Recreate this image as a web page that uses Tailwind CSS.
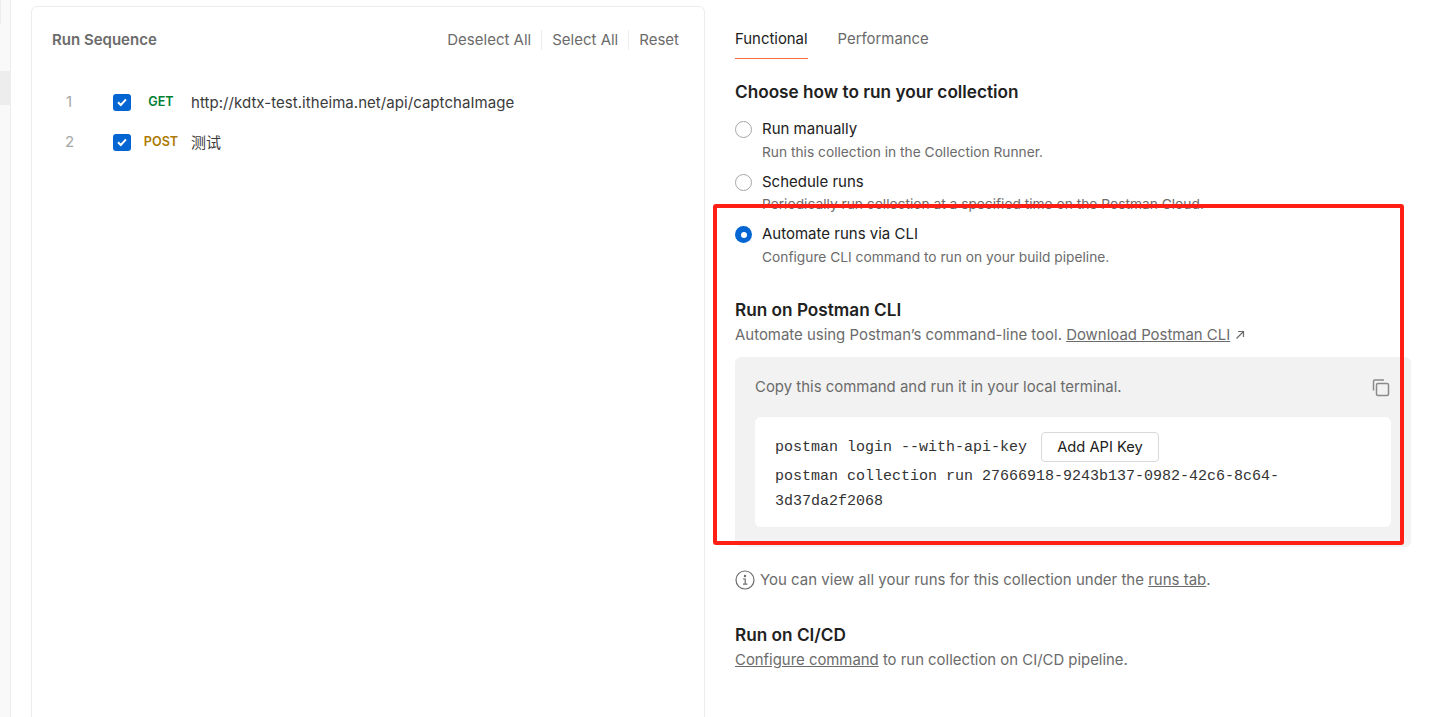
<!DOCTYPE html>
<html lang="en">
<head>
    <meta charset="UTF-8">
    <title>Run Collection</title>
    <script src="https://cdn.jsdelivr.net/npm/@tailwindcss/browser@4"></script>
</head>
<body class="relative h-[717px] w-[1447px] overflow-hidden bg-white font-['Inter','Noto_Sans_CJK_SC',sans-serif] text-[15px] text-[#212121]">
    <div class="flex h-full">
        <!-- Sidebar sliver -->
        <aside class="relative w-[11px] shrink-0 border-r border-[#ededed] bg-[#f9f9f9]">
            <div class="h-[24px] w-[1px] bg-[#ededed]"></div>
            <div class="mt-[47px] h-[34px] bg-[#ededed]"></div>
        </aside>

        <!-- Run sequence card -->
        <section class="ml-[20px] mt-[6px] h-[711px] w-[674px] shrink-0 rounded-t-md border border-b-0 border-[#ededed] px-[20px]">
            <div class="flex h-[65px] items-center justify-between pt-[1px]">
                <h2 class="font-semibold text-[#6b6b6b]">Run Sequence</h2>
                <div class="mr-[5px] flex items-center text-[15px] text-[#6b6b6b]">
                    <button class="border-r border-[#ededed] pr-[10px] leading-[20px]">Deselect All</button>
                    <button class="border-r border-[#ededed] px-[10px] leading-[20px]">Select All</button>
                    <button class="pl-[10px] leading-[20px]">Reset</button>
                </div>
            </div>
            <ul class="mt-[10px]">
                <li class="flex h-[40px] items-center">
                    <span class="w-[20px] pl-[14px] pt-[1px] text-[#a6a6a6]">1</span>
                    <span class="ml-[41px] flex h-[17px] w-[18px] items-center justify-center rounded-[3px] bg-[#0265d2]">
                        <svg class="h-[12px] w-[12px]" viewBox="0 0 12 12" fill="none" stroke="white" stroke-width="2"><path d="M2 6.2 4.8 9 10 3.4"/></svg>
                    </span>
                    <span class="ml-[6px] w-[48px] text-center text-[12.6px] font-semibold text-[#007f31]">GET</span>
                    <span class="ml-[6px] pt-[2px] tracking-[0.05px] text-[#3b3b3b]">http://kdtx-test.itheima.net/api/captchaImage</span>
                </li>
                <li class="flex h-[40px] items-center">
                    <span class="w-[20px] pl-[13px] pt-[1px] text-[#a6a6a6]">2</span>
                    <span class="ml-[41px] flex h-[17px] w-[18px] items-center justify-center rounded-[3px] bg-[#0265d2]">
                        <svg class="h-[12px] w-[12px]" viewBox="0 0 12 12" fill="none" stroke="white" stroke-width="2"><path d="M2 6.2 4.8 9 10 3.4"/></svg>
                    </span>
                    <span class="ml-[6px] w-[48px] text-center text-[12.6px] font-semibold text-[#ad7a03]">POST</span>
                    <span class="ml-[6px] pt-[2px] text-[#3b3b3b]">测试</span>
                </li>
            </ul>
        </section>

        <!-- Right panel -->
        <main class="ml-[30px] w-[676px] shrink-0">
            <nav class="flex h-[59px] gap-[30px] pt-[29px] text-[14.9px] leading-[20px]">
                <a class="h-[30px] border-b border-[#ff6c37] text-[#212121]">Functional</a>
                <a class="text-[#6b6b6b]">Performance</a>
            </nav>

            <h2 class="mt-[21px] text-[17.2px] leading-[24px] font-semibold text-[#212121]">Choose how to run your collection</h2>

            <div class="mt-[15px] flex h-[53px] gap-[10px]">
                <span class="mt-[2px] h-[17px] w-[17px] rounded-full border border-[#a6a6a6]"></span>
                <div>
                    <p class="leading-[20px]">Run manually</p>
                    <p class="mt-[3px] text-[13.75px] leading-[20px] text-[#6b6b6b]">Run this collection in the Collection Runner.</p>
                </div>
            </div>
            <div class="flex h-[52px] gap-[10px]">
                <span class="mt-[2px] h-[17px] w-[17px] rounded-full border border-[#a6a6a6]"></span>
                <div>
                    <p class="leading-[20px]">Schedule runs</p>
                    <p class="mt-[2px] text-[13.75px] leading-[20px] text-[#6b6b6b]">Periodically run collection at a specified time on the Postman Cloud.</p>
                </div>
            </div>
            <div class="flex h-[53px] gap-[10px]">
                <span class="mt-[2px] flex h-[17px] w-[17px] items-center justify-center rounded-full bg-[#0265d2]">
                    <span class="h-[6px] w-[6px] rounded-full bg-white"></span>
                </span>
                <div>
                    <p class="leading-[20px]">Automate runs via CLI</p>
                    <p class="mt-[3px] text-[13.75px] leading-[20px] text-[#6b6b6b]">Configure CLI command to run on your build pipeline.</p>
                </div>
            </div>

            <h3 class="mt-[21px] text-[17.2px] leading-[24px] font-semibold text-[#212121]">Run on Postman CLI</h3>
            <p class="mt-[1px] flex items-center text-[14.95px] leading-[24px] text-[#6b6b6b]">
                Automate using Postman’s command-line tool.&nbsp;<a class="underline">Download Postman CLI</a>
                <svg class="ml-[5px] h-[10px] w-[10px]" viewBox="0 0 10 10" fill="none" stroke="#6b6b6b" stroke-width="1.2"><path d="M1.5 8.5 8.5 1.5M3 1.5h5.5V7"/></svg>
            </p>

            <div class="mt-[10px] h-[190px] w-[676px] rounded-md bg-[#f2f2f2] px-[20px] pt-[20px]">
                <div class="flex h-[20px] items-center justify-between">
                    <p class="text-[14.95px] text-[#6b6b6b]">Copy this command and run it in your local terminal.</p>
                    <svg class="mt-[1px] h-[20px] w-[20px]" viewBox="0 0 20 20" fill="none" stroke="#8a8a8a" stroke-width="1.5">
                        <rect x="5.5" y="5.5" width="12" height="12" rx="1.5"/>
                        <path d="M2.5 12.5V3.5a1.5 1.5 0 0 1 1.5-1.5h9"/>
                    </svg>
                </div>
                <div class="mt-[20px] h-[110px] rounded-md bg-white px-[20px] pt-[15px] font-['Liberation_Mono',monospace] text-[15px] text-[#333333]">
                    <div class="flex h-[30px] items-center">
                        <code class="pt-[2px] font-['Liberation_Mono',monospace]">postman login --with-api-key</code>
                        <button class="ml-[14px] h-[30px] w-[118px] rounded-[4px] border border-[#d9d9d9] bg-white font-['Inter',sans-serif] text-[14.7px] text-[#212121]">Add API Key</button>
                    </div>
                    <code class="mt-[2px] block w-[520px] font-['Liberation_Mono',monospace] leading-[25px]">postman collection run 27666918-9243b137-0982-42c6-8c64-3d37da2f2068</code>
                </div>
            </div>

            <p class="mt-[21px] flex items-center text-[15px] leading-[24px] text-[#6b6b6b]">
                <svg class="mr-[5px] h-[20px] w-[20px]" viewBox="0 0 20 20" fill="none" stroke="#6b6b6b" stroke-width="1.2">
                    <circle cx="10" cy="10" r="9"/>
                    <path d="M8 9h2.2v5M8 14.2h4.4" />
                    <circle cx="10" cy="6" r=".6" fill="#6b6b6b"/>
                </svg>
                You can view all your runs for this collection under the&nbsp;<a class="underline">runs tab</a>.
            </p>

            <h3 class="mt-[31px] text-[17.2px] leading-[24px] font-semibold text-[#212121]">Run on CI/CD</h3>
            <p class="mt-[1px] text-[14.9px] leading-[24px] text-[#6b6b6b]"><a class="underline">Configure command</a> to run collection on CI/CD pipeline.</p>
        </main>
    </div>

    <!-- Red annotation box drawn over the screenshot -->
    <div class="absolute top-[204px] left-[713px] h-[341px] w-[691px] rounded-[3px] border-[4px] border-[#ff1f14]"></div>
</body>
</html>
